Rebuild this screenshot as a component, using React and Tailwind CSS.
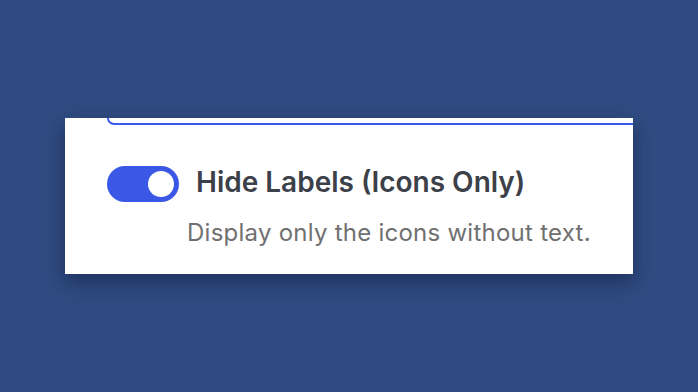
import { useState } from "react";

const Toggle = ({ checked, onChange }) => {
  return (
    <button
      type="button"
      onClick={() => onChange(!checked)}
      className={`w-[72px] h-[36px] rounded-full flex items-center px-[5px] shrink-0 ${
        checked ? "bg-[#3a57e5] justify-end" : "bg-gray-300 justify-start"
      }`}
    >
      <span className="w-[26px] h-[26px] rounded-full bg-white block" />
    </button>
  );
};

export default function App() {
  const [hideLabels, setHideLabels] = useState(true);

  return (
    <div
      className="w-full h-[392px] bg-[#2f4b81] overflow-hidden pt-[118px] pl-[65px]"
      style={{ fontFamily: "Inter, 'Noto Sans', sans-serif" }}
    >
      <div className="w-[568px] h-[156px] bg-white overflow-hidden shadow-[0_8px_18px_rgba(10,20,50,0.45)]">
        <div className="ml-[42px] -mt-[40px] w-[560px] h-[47px] border-2 border-[#3a5ae8] rounded-[7px]" />

        <div className="pl-[42px] pt-[41px]">
          <div className="flex items-center gap-[17px]">
            <Toggle checked={hideLabels} onChange={setHideLabels} />
            <span className="text-[28px] font-semibold text-[#3b4049] leading-none pb-[5px]">
              Hide Labels (Icons Only)
            </span>
          </div>
          <p className="ml-[80px] mt-[19px] text-[24px] tracking-[0.25px] text-[#707070] leading-none">
            Display only the icons without text.
          </p>
        </div>
      </div>
    </div>
  );
}
